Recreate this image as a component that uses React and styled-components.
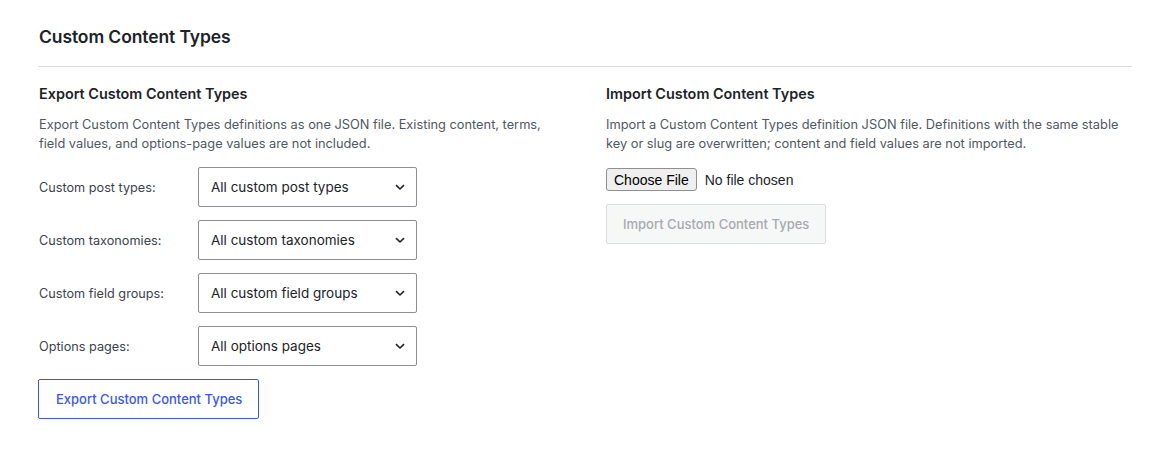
import React from "react";
import styled, { createGlobalStyle } from "styled-components";

const GlobalStyle = createGlobalStyle`
  body {
    margin: 0;
    background: #fff;
    font-family: Inter, "Noto Sans", sans-serif;
    color: #1d2327;
  }
`;

const Page = styled.div`
  padding: 24px 38px 40px 38px;
`;

const Title = styled.h1`
  margin: 0 0 0 1px;
  font-size: 17.5px;
  line-height: 26px;
  font-weight: 600;
  color: #1d2327;
  letter-spacing: -0.1px;
`;

const Divider = styled.hr`
  border: none;
  border-top: 1px solid #dcdcde;
  margin: 16px 0 17px 0;
`;

const Columns = styled.div`
  display: grid;
  grid-template-columns: 1fr 1fr;
  column-gap: 42px;
`;

const Column = styled.section`
  display: flex;
  flex-direction: column;
  padding-left: ${(props) => (props.inset ? "1px" : "0")};
`;

const Heading = styled.h2`
  margin: 0;
  font-size: 14.4px;
  line-height: 20px;
  font-weight: 600;
  color: #1d2327;
`;

const Description = styled.p`
  margin: 12px 0 0 0;
  font-size: 12.8px;
  line-height: 18.5px;
  color: #50575e;
  max-width: ${(props) => props.maxWidth || "none"};
`;

const FieldList = styled.div`
  display: flex;
  flex-direction: column;
  gap: 13px;
  margin-top: 14px;
`;

const FieldRow = styled.label`
  display: flex;
  align-items: center;
`;

const FieldLabel = styled.span`
  width: 159px;
  font-size: 12.7px;
  color: #3c434a;
`;

const SelectBox = styled.div`
  width: 219px;
  height: 40px;
  box-sizing: border-box;
  border: 1px solid #8c8f94;
  border-radius: 2px;
  display: flex;
  align-items: center;
  justify-content: space-between;
  padding: 0 9px 0 12px;
  font-size: 13.5px;
  color: #1d2327;
  background: #fff;
`;

const Chevron = () => (
  <svg width="14" height="14" viewBox="0 0 14 14" fill="none">
    <path d="M3 5.2 7 9l4-3.8" stroke="#1d2327" strokeWidth="1.6" />
  </svg>
);

const OutlineButton = styled.button`
  margin-top: 13px;
  margin-left: -1px;
  align-self: flex-start;
  height: 40px;
  padding: 0 16px 0 17px;
  border: 1px solid #3858e9;
  border-radius: 2px;
  background: #fff;
  color: #3858e9;
  font-family: Inter, "Noto Sans", sans-serif;
  font-size: 13px;
  font-weight: 500;
  cursor: pointer;
`;

const FileRow = styled.div`
  margin-top: 15px;
  display: flex;
  align-items: center;
  gap: 8px;
  font-family: "Liberation Sans", Arial, sans-serif;
  font-size: 14px;
  color: #1d2327;
`;

const FileButton = styled.span`
  display: inline-flex;
  align-items: center;
  height: 23px;
  box-sizing: border-box;
  padding: 0 7px;
  border: 1px solid #8f8f8f;
  border-radius: 3px;
  background: #efefef;
  color: #000;
`;

const DisabledButton = styled.button`
  margin-top: 13px;
  align-self: flex-start;
  height: 40px;
  padding: 0 16px;
  border: 1px solid #dcdcde;
  border-radius: 2px;
  background: #f6f7f7;
  color: #a7aaad;
  font-family: Inter, "Noto Sans", sans-serif;
  font-size: 13px;
  font-weight: 500;
`;

const fields = [
  { label: "Custom post types:", value: "All custom post types" },
  { label: "Custom taxonomies:", value: "All custom taxonomies" },
  { label: "Custom field groups:", value: "All custom field groups" },
  { label: "Options pages:", value: "All options pages" },
];

export default function App() {
  return (
    <>
      <GlobalStyle />
      <Page>
        <Title>Custom Content Types</Title>
        <Divider />
        <Columns>
          <Column inset>
            <Heading>Export Custom Content Types</Heading>
            <Description maxWidth="520px">
              Export Custom Content Types definitions as one JSON file. Existing content, terms,
              field values, and options-page values are not included.
            </Description>
            <FieldList>
              {fields.map((f) => (
                <FieldRow key={f.label}>
                  <FieldLabel>{f.label}</FieldLabel>
                  <SelectBox>
                    <span>{f.value}</span>
                    <Chevron />
                  </SelectBox>
                </FieldRow>
              ))}
            </FieldList>
            <OutlineButton>Export Custom Content Types</OutlineButton>
          </Column>
          <Column>
            <Heading>Import Custom Content Types</Heading>
            <Description maxWidth="516px">
              Import a Custom Content Types definition JSON file. Definitions with the same stable
              key or slug are overwritten; content and field values are not imported.
            </Description>
            <FileRow>
              <FileButton>Choose File</FileButton>
              <span>No file chosen</span>
            </FileRow>
            <DisabledButton disabled>Import Custom Content Types</DisabledButton>
          </Column>
        </Columns>
      </Page>
    </>
  );
}
